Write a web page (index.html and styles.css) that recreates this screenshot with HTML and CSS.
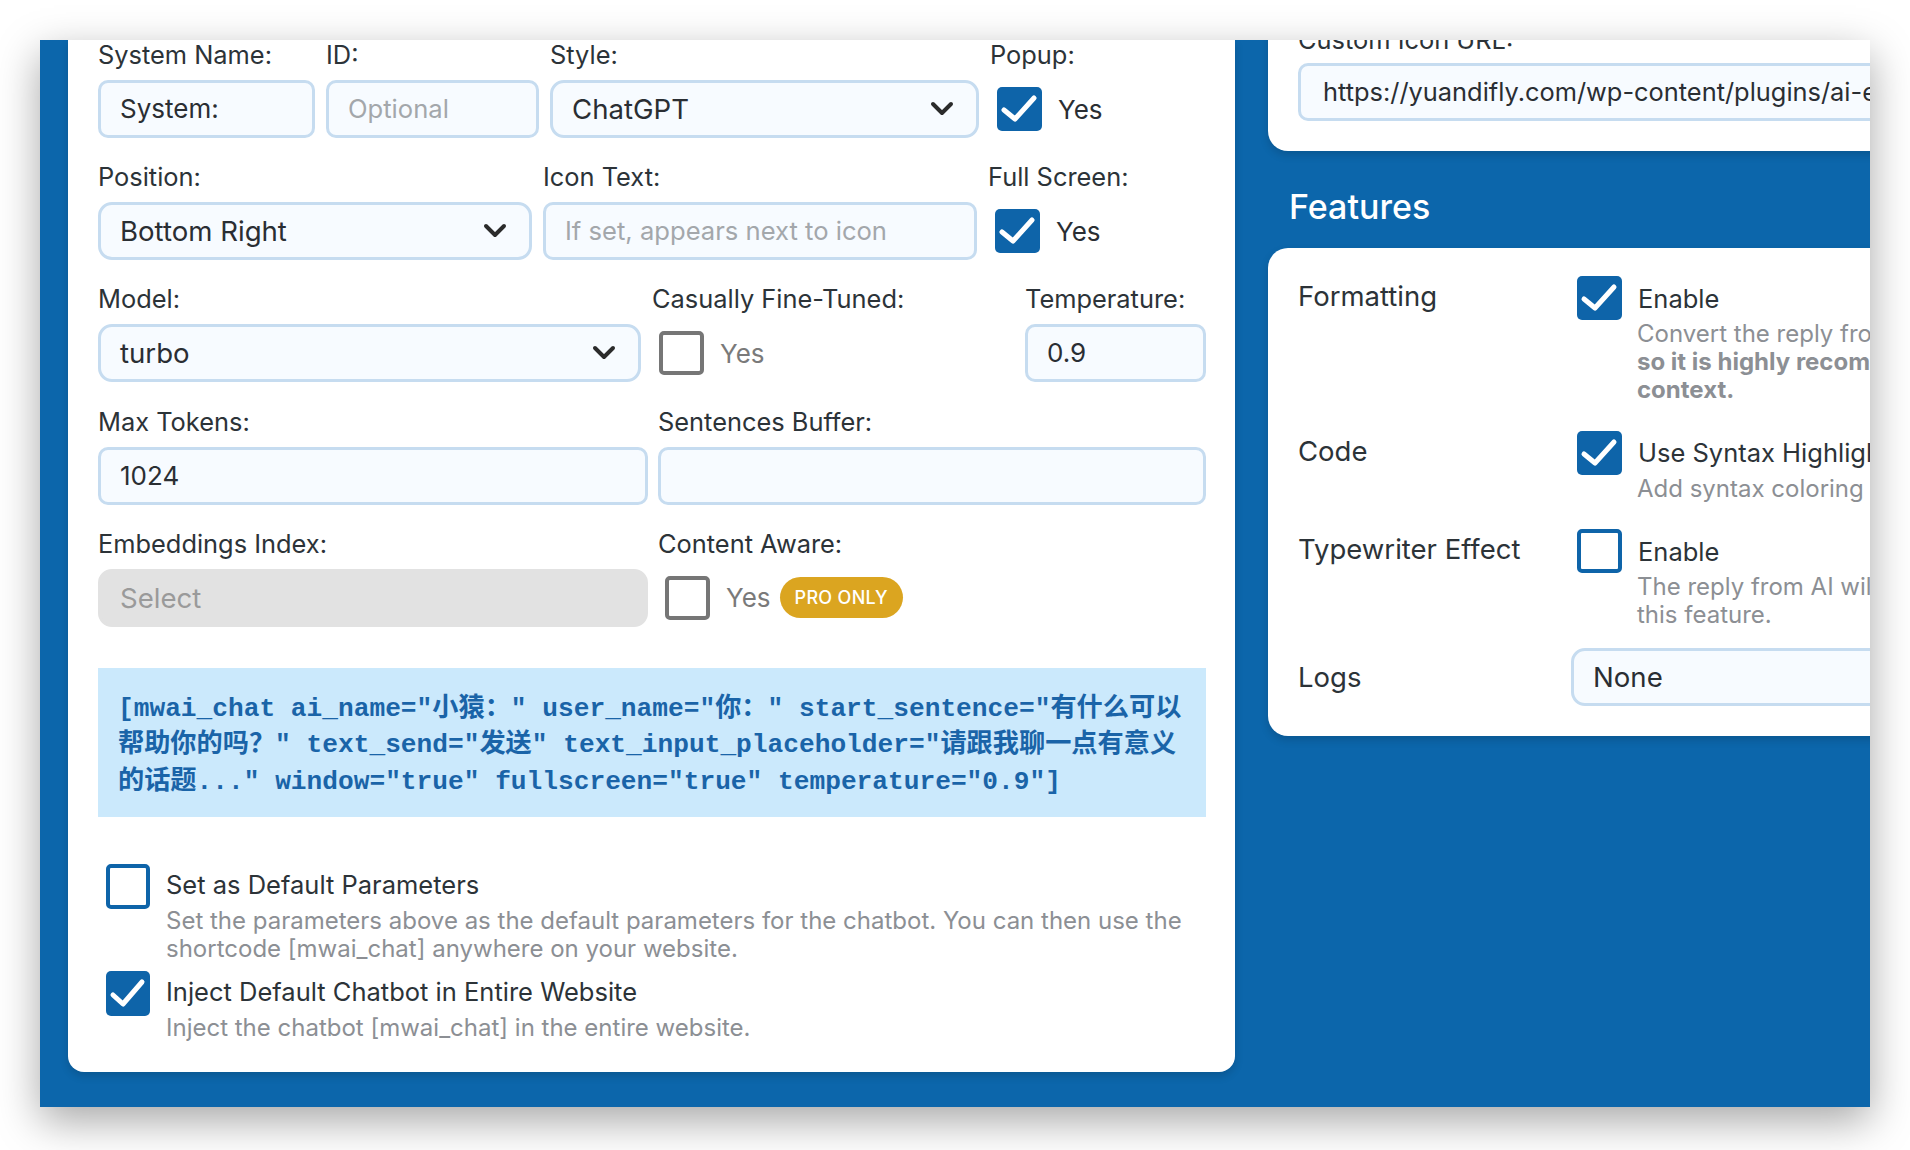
FILE: index.html
```html
<!DOCTYPE html>
<html>
<head>
<meta charset="utf-8">
<link rel="stylesheet" href="styles.css">
</head>
<body>
<div class="window">
  <div class="main-card">
    <div class="row r1">
      <div class="field"><div class="label">System Name:</div><div class="input">System:</div></div>
      <div class="field"><div class="label">ID:</div><div class="input ph">Optional</div></div>
      <div class="field"><div class="label">Style:</div><div class="input select"><span>ChatGPT</span><svg class="chev" viewBox="0 0 24 16"><path d="M3 3 L12 12 L21 3"/></svg></div></div>
      <div class="field"><div class="label">Popup:</div><div class="check-line"><span class="cb on"><svg viewBox="0 0 45 44"><path d="M7 23 L18 32 L37 11"/></svg></span><span class="yes">Yes</span></div></div>
    </div>
    <div class="row r2">
      <div class="field"><div class="label">Position:</div><div class="input select"><span>Bottom Right</span><svg class="chev" viewBox="0 0 24 16"><path d="M3 3 L12 12 L21 3"/></svg></div></div>
      <div class="field"><div class="label">Icon Text:</div><div class="input ph">If set, appears next to icon</div></div>
      <div class="field"><div class="label">Full Screen:</div><div class="check-line"><span class="cb on"><svg viewBox="0 0 45 44"><path d="M7 23 L18 32 L37 11"/></svg></span><span class="yes">Yes</span></div></div>
    </div>
    <div class="row r3">
      <div class="field"><div class="label">Model:</div><div class="input select"><span>turbo</span><svg class="chev" viewBox="0 0 24 16"><path d="M3 3 L12 12 L21 3"/></svg></div></div>
      <div class="field"><div class="label">Casually Fine-Tuned:</div><div class="check-line"><span class="cb off-gray"></span><span class="yes dim">Yes</span></div></div>
      <div class="field"><div class="label">Temperature:</div><div class="input">0.9</div></div>
    </div>
    <div class="row r4">
      <div class="field"><div class="label">Max Tokens:</div><div class="input">1024</div></div>
      <div class="field"><div class="label">Sentences Buffer:</div><div class="input"></div></div>
    </div>
    <div class="row r4">
      <div class="field"><div class="label">Embeddings Index:</div><div class="input select disabled"><span>Select</span></div></div>
      <div class="field"><div class="label">Content Aware:</div><div class="check-line"><span class="cb off-gray"></span><span class="yes dim">Yes</span><span class="pro">PRO ONLY</span></div></div>
    </div>
    <div class="code">[mwai_chat ai_name="小猿：" user_name="你：" start_sentence="有什么可以<br>帮助你的吗？" text_send="发送" text_input_placeholder="请跟我聊一点有意义<br>的话题..." window="true" fullscreen="true" temperature="0.9"]</div>
    <div class="opt first">
      <span class="cb off-blue"></span>
      <div class="opt-text">
        <div class="opt-title">Set as Default Parameters</div>
        <div class="opt-desc">Set the parameters above as the default parameters for the chatbot. You can then use the<br>shortcode [mwai_chat] anywhere on your website.</div>
      </div>
    </div>
    <div class="opt">
      <span class="cb on"><svg viewBox="0 0 44 45"><path d="M7 24 L17 33 L36 11"/></svg></span>
      <div class="opt-text">
        <div class="opt-title">Inject Default Chatbot in Entire Website</div>
        <div class="opt-desc">Inject the chatbot [mwai_chat] in the entire website.</div>
      </div>
    </div>
  </div>
  <div class="side">
    <div class="side-top">
      <div class="label side-label">Custom Icon URL:</div>
      <div class="input url">https://yuandifly.com/wp-content/plugins/ai-engine/images/chat-green.svg</div>
    </div>
    <div class="side-head">Features</div>
    <div class="features">
      <div class="frow">
        <div class="flabel">Formatting</div>
        <div class="fctrl">
          <div class="fcheck"><span class="cb on"><svg viewBox="0 0 45 44"><path d="M7 23 L18 32 L37 11"/></svg></span><span class="ftitle">Enable</span></div>
          <div class="fdesc">Convert the reply from the AI into HTML. <b>Markdown is supported,</b><br><b>so it is highly recommended to add 'Use Markdown.' in your</b><br><b>context.</b></div>
        </div>
      </div>
      <div class="frow">
        <div class="flabel">Code</div>
        <div class="fctrl">
          <div class="fcheck"><span class="cb on"><svg viewBox="0 0 45 44"><path d="M7 23 L18 32 L37 11"/></svg></span><span class="ftitle">Use Syntax Highlighting</span></div>
          <div class="fdesc">Add syntax coloring to the code written by the AI.</div>
        </div>
      </div>
      <div class="frow">
        <div class="flabel">Typewriter Effect</div>
        <div class="fctrl">
          <div class="fcheck"><span class="cb off-blue"></span><span class="ftitle">Enable</span></div>
          <div class="fdesc">The reply from AI will be typed like a typewriter. Streaming is not used with<br>this feature.</div>
        </div>
      </div>
      <div class="frow logs">
        <div class="flabel">Logs</div>
        <div class="fctrl"><div class="input select logsel"><span>None</span></div></div>
      </div>
    </div>
  </div>
</div>
</body>
</html>
```

FILE: styles.css
```css
html, body { margin: 0; padding: 0; background: #ffffff; }
body {
  font-family: Inter, "Noto Sans", sans-serif;
  color: #2c3338;
  width: 1910px;
  height: 1150px;
  overflow: hidden;
}
.window {
  margin: 40px 0 0 40px;
  width: 1830px;
  height: 1067px;
  background: #0c66ab;
  box-shadow: 0 14px 40px rgba(0,0,0,0.35);
  display: flex;
  align-items: flex-start;
  padding-left: 28px;
  box-sizing: border-box;
  overflow: hidden;
}
.main-card {
  flex: 0 0 1167px;
  height: 1032px;
  box-sizing: border-box;
  background: #fff;
  border-radius: 0 0 16px 16px;
  padding: 0 29px 0 30px;
  box-shadow: 0 4px 8px rgba(0,0,0,0.15);
}
.row { display: grid; column-gap: 11px; margin-bottom: 24.2px; }
.r1 { grid-template-columns: 217px 213px 429px 1fr; }
.r2 { grid-template-columns: 434px 434px 1fr; }
.r3 { grid-template-columns: 543px 362px 1fr; }
.r4 { grid-template-columns: 550px 1fr; column-gap: 10px; }
.label {
  font-size: 25.4px;
  line-height: 30px;
  height: 30px;
  margin-bottom: 10px;
  white-space: nowrap;
  color: #2c3338;
}
.input {
  height: 58px;
  box-sizing: border-box;
  border: 3px solid #c6dcf0;
  border-radius: 10px;
  background: #f7fbff;
  padding: 0 22px 0 19px;
  font-size: 26px;
  line-height: 52px;
  color: #2a2e33;
  white-space: nowrap;
  overflow: hidden;
}
.input.ph { color: #a3a7ab; font-size: 25.6px; }
.input.select {
  display: flex;
  align-items: center;
  justify-content: space-between;
  border-radius: 14px;
  font-size: 27.6px;
}
.chev { width: 24px; height: 16px; flex: 0 0 24px; }
.chev path { fill: none; stroke: #2b2b2b; stroke-width: 4; stroke-linecap: round; stroke-linejoin: round; }
.input.disabled {
  background: #e2e2e2;
  border-color: #e2e2e2;
  border-radius: 14px;
  color: #9a9a9a;
}
.check-line {
  height: 58px;
  display: flex;
  align-items: center;
  padding-left: 7px;
}
.cb {
  flex: 0 0 auto;
  width: 45px;
  height: 44px;
  box-sizing: border-box;
  border-radius: 5px;
  display: inline-block;
}
.cb.on { background: #0e64a9; }
.cb.on svg { width: 45px; height: 44px; display: block; }
.cb.on path { fill: none; stroke: #fff; stroke-width: 5; stroke-linecap: round; stroke-linejoin: round; }
.cb.off-gray { border: 4px solid #767676; background: #fff; }
.cb.off-blue { border: 4px solid #0e64a9; background: #fff; }
.yes { font-size: 26px; margin-left: 16px; color: #2a2e33; }
.yes.dim { color: #7a7a7a; }
.pro {
  margin-left: 9px;
  background: #dba520;
  color: #fff;
  font-size: 18px;
  font-weight: 500;
  height: 41px;
  line-height: 41px;
  padding: 0 15px;
  border-radius: 21px;
  letter-spacing: 0.3px;
}
.code {
  margin-top: 41px;
  background: #cbe9fc;
  color: #1a64a8;
  font-family: "Liberation Mono", "Noto Sans CJK SC", monospace;
  font-weight: bold;
  font-size: 26.2px;
  line-height: 36.5px;
  padding: 23px 20px 17px 20px;
}
.opt { display: flex; align-items: flex-start; margin-left: 8px; }
.opt.first { margin-top: 47px; margin-bottom: 8px; }
.opt .cb { width: 44px; height: 45px; }
.opt .cb.on svg { width: 44px; height: 45px; }
.opt-text { margin-left: 16px; padding-top: 6px; }
.opt-title { font-size: 25.5px; line-height: 30px; margin-bottom: 7px; color: #2c3338; }
.opt-desc { font-size: 24px; line-height: 28px; color: #8c8f94; white-space: nowrap; }
.side { flex: 0 0 800px; margin-left: 33px; }
.side-top {
  background: #fff;
  border-radius: 0 0 0 20px;
  padding: 0 30px 30px 30px;
  box-shadow: 0 4px 8px rgba(0,0,0,0.15);
}
.side-label { margin-top: -15px; margin-bottom: 8px; }
.input.url { padding-left: 22px; font-size: 25.4px; }
.side-head {
  color: #fff;
  font-size: 34px;
  font-weight: 500;
  line-height: 40px;
  padding: 36px 0 21px 21px;
}
.features {
  background: #fff;
  border-radius: 20px 0 0 20px;
  padding: 28px 30px 30px 30px;
  box-shadow: 0 4px 8px rgba(0,0,0,0.15);
}
.frow { display: grid; grid-template-columns: 273px 1fr; margin-bottom: 26.5px; }
.frow.logs { margin-top: -8px; margin-bottom: 0; }
.flabel { font-size: 27.5px; line-height: 40px; color: #2c3338; white-space: nowrap; }
.logs .flabel { line-height: 58px; }
.fcheck { display: flex; align-items: center; padding-left: 6px; height: 44px; }
.ftitle { font-size: 25.5px; margin-left: 16px; white-space: nowrap; color: #2c3338; }
.fdesc { font-size: 24px; line-height: 28px; color: #8c8f94; padding-left: 66px; white-space: nowrap; }
.fdesc b { font-weight: 700; }
.logsel { width: 600px; font-size: 28px; }
```
